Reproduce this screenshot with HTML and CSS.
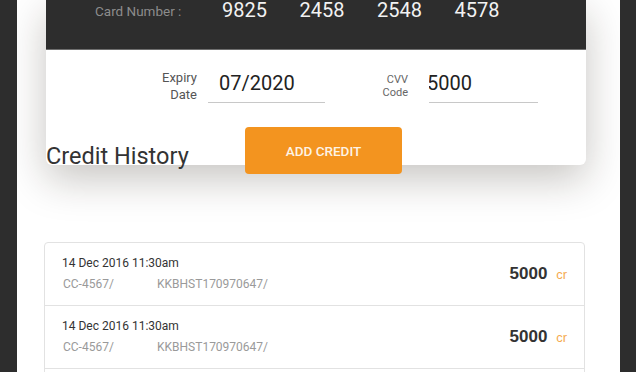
FILE: index.html
```html
<!DOCTYPE html>
<html lang="en">
<head>
    <meta charset="UTF-8">
    <meta name="viewport" content="width=device-width, initial-scale=1.0">
    <title>Add Credit</title>
    <link rel="stylesheet" href="styles.css">
</head>
<body>
    <div class="page">
        <div class="card">
            <div class="card-top">
                <span class="card-label">Card Number :</span>
                <span class="card-digits">9825</span>
                <span class="card-digits">2458</span>
                <span class="card-digits">2548</span>
                <span class="card-digits">4578</span>
            </div>
            <div class="card-body">
                <div class="fields">
                    <label class="field-label expiry-label" for="expiry">Expiry<br>Date</label>
                    <input class="field-input expiry-input" id="expiry" type="text" value="07/2020">
                    <label class="field-label cvv-label" for="cvv">CVV<br>Code</label>
                    <input class="field-input cvv-input" id="cvv" type="text" value="5000">
                </div>
                <div class="card-foot">
                    <h2 class="history-title">Credit History</h2>
                    <button class="btn">ADD CREDIT</button>
                </div>
            </div>
        </div>

        <div class="history">
            <div class="history-row">
                <div class="history-info">
                    <div class="history-date">14 Dec 2016 11:30am</div>
                    <div class="history-refs"><span class="ref-card">CC-4567/</span><span>KKBHST170970647/</span></div>
                </div>
                <div class="history-amount">5000 <span class="unit">cr</span></div>
            </div>
            <div class="history-row">
                <div class="history-info">
                    <div class="history-date">14 Dec 2016 11:30am</div>
                    <div class="history-refs"><span class="ref-card">CC-4567/</span><span>KKBHST170970647/</span></div>
                </div>
                <div class="history-amount">5000 <span class="unit">cr</span></div>
            </div>
        </div>
    </div>
</body>
</html>
```
FILE: styles.css
```css
body {
    margin: 0;
    background-color: #2d2d2d;
    font-family: Roboto, "Liberation Sans", sans-serif;
    height: 372px;
    overflow: hidden;
}
.page {
    margin: 0 16px 0 17px;
    background: white;
    height: 372px;
    overflow: hidden;
}
.card {
    margin-left: 29px;
    width: 540px;
    background: white;
    border-radius: 0 0 6px 6px;
    box-shadow: 0 14px 40px rgba(30, 25, 10, 0.25);
}
.card-top {
    display: flex;
    align-items: center;
    height: 21px;
    padding: 0 0 28px 49px;
    background: #2d2d2d;
    border-bottom: 1px solid #6e6e6e;
}
.card-label {
    width: 127px;
    font-size: 13.5px;
    line-height: 20px;
    color: #8c8c8c;
}
.card-digits {
    width: 77.5px;
    font-size: 20px;
    line-height: 21px;
    color: #f2f2f2;
}
.card-body {
    display: flow-root;
    padding-top: 18px;
}
.fields {
    display: flex;
    align-items: center;
}
.field-label {
    text-align: right;
}
.expiry-label {
    width: 50px;
    margin-left: 101px;
    font-size: 13px;
    line-height: 17px;
    color: #555;
}
.cvv-label {
    width: 40px;
    margin-left: 43px;
    font-size: 11px;
    line-height: 13px;
    color: #666;
}
.field-input {
    height: 35px;
    box-sizing: border-box;
    border: none;
    border-bottom: 1px solid #c8c8c8;
    outline: none;
    font-family: Roboto, sans-serif;
    font-size: 20px;
    color: #222;
    background: transparent;
}
.expiry-input {
    width: 117px;
    margin-left: 11px;
    padding: 0 0 4px 11px;
}
.cvv-input {
    width: 109px;
    margin-left: 21px;
    padding: 0 0 4px;
    text-indent: -2px;
}
.card-foot {
    display: flex;
    align-items: flex-end;
    margin-top: 24px;
    margin-bottom: -9px;
}
.history-title {
    width: 199px;
    margin: 0 0 4px;
    font-size: 23.5px;
    line-height: 28px;
    font-weight: 400;
    color: #333;
    white-space: nowrap;
}
.btn {
    width: 157px;
    height: 47px;
    border: none;
    border-radius: 4px;
    background-color: #f3941f;
    color: #fdf3e6;
    font-family: Roboto, sans-serif;
    font-size: 13.5px;
    font-weight: 500;
    cursor: pointer;
}
.history {
    margin: 77px 0 0 27px;
    width: 541px;
    min-height: 200px;
    box-sizing: border-box;
    border: 1px solid #e2e2e2;
    border-radius: 4px;
}
.history-row {
    display: flex;
    align-items: center;
    justify-content: space-between;
    height: 62px;
    padding: 0 17px 0 17px;
    border-bottom: 1px solid #e2e2e2;
}
.history-info {
    padding-bottom: 2px;
}
.history-date {
    font-size: 12px;
    color: #333;
    margin-bottom: 7px;
}
.history-refs {
    font-size: 12px;
    color: #9a9a9a;
}
.ref-card {
    display: inline-block;
    width: 94px;
    padding-left: 1px;
}
.history-amount {
    font-family: "Liberation Sans", Arial, sans-serif;
    font-size: 17px;
    font-weight: bold;
    color: #333;
}
.unit {
    margin-left: 4px;
    font-size: 13px;
    font-weight: normal;
    color: #f5ab50;
}
```
